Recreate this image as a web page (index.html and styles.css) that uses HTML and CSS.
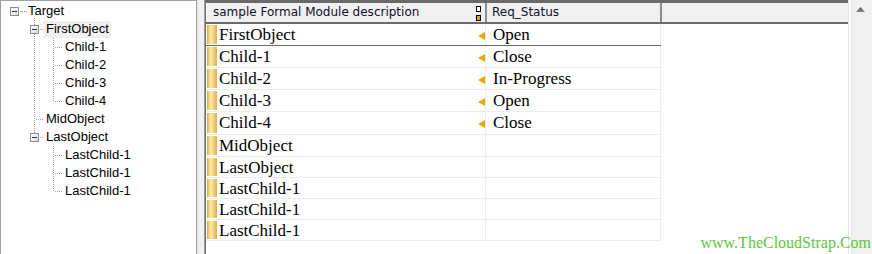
FILE: index.html
```html
<!DOCTYPE html>
<html>
<head>
<meta charset="utf-8">
<title>Formal Module</title>
<link rel="stylesheet" href="styles.css">
</head>
<body>
<div class="app">
  <aside class="tree-pane">
    <ul class="tree">
      <li class="node root">
        <div class="item"><span class="twisty"><span class="box"></span></span><span class="label">Target</span></div>
        <ul class="group g1">
          <li class="node">
            <div class="item"><span class="twisty"><span class="box"></span></span><span class="label selected">FirstObject</span></div>
            <ul class="group">
              <li class="node"><div class="item"><span class="twisty"></span><span class="label">Child-1</span></div></li>
              <li class="node"><div class="item"><span class="twisty"></span><span class="label">Child-2</span></div></li>
              <li class="node"><div class="item"><span class="twisty"></span><span class="label">Child-3</span></div></li>
              <li class="node"><div class="item"><span class="twisty"></span><span class="label">Child-4</span></div></li>
            </ul>
          </li>
          <li class="node"><div class="item"><span class="twisty"></span><span class="label">MidObject</span></div></li>
          <li class="node">
            <div class="item"><span class="twisty"><span class="box"></span></span><span class="label">LastObject</span></div>
            <ul class="group">
              <li class="node"><div class="item"><span class="twisty"></span><span class="label">LastChild-1</span></div></li>
              <li class="node"><div class="item"><span class="twisty"></span><span class="label">LastChild-1</span></div></li>
              <li class="node"><div class="item"><span class="twisty"></span><span class="label">LastChild-1</span></div></li>
            </ul>
          </li>
        </ul>
      </li>
    </ul>
  </aside>
  <div class="splitter"></div>
  <section class="grid-pane">
    <div class="grid">
      <div class="grid-header">
        <div class="hcell c1"><span class="htext">sample Formal Module description</span><span class="col-icon"><i class="slot"></i><i class="slot on"></i></span></div>
        <div class="hcell c2"><span class="htext">Req_Status</span></div>
        <div class="hcell c3"></div>
      </div>
      <div class="grid-body">
        <div class="row current"><div class="cell c1"><span class="marker"></span><span class="text">FirstObject</span><span class="link"></span></div><div class="cell c2">Open</div></div>
        <div class="row"><div class="cell c1"><span class="marker"></span><span class="text">Child-1</span><span class="link"></span></div><div class="cell c2">Close</div></div>
        <div class="row"><div class="cell c1"><span class="marker"></span><span class="text">Child-2</span><span class="link"></span></div><div class="cell c2">In-Progress</div></div>
        <div class="row"><div class="cell c1"><span class="marker"></span><span class="text">Child-3</span><span class="link"></span></div><div class="cell c2">Open</div></div>
        <div class="row tall"><div class="cell c1"><span class="marker"></span><span class="text">Child-4</span><span class="link"></span></div><div class="cell c2">Close</div></div>
        <div class="row"><div class="cell c1"><span class="marker"></span><span class="text">MidObject</span></div><div class="cell c2"></div></div>
        <div class="row compact"><div class="cell c1"><span class="marker"></span><span class="text">LastObject</span></div><div class="cell c2"></div></div>
        <div class="row compact"><div class="cell c1"><span class="marker"></span><span class="text">LastChild-1</span></div><div class="cell c2"></div></div>
        <div class="row compact"><div class="cell c1"><span class="marker"></span><span class="text">LastChild-1</span></div><div class="cell c2"></div></div>
        <div class="row compact"><div class="cell c1"><span class="marker"></span><span class="text">LastChild-1</span></div><div class="cell c2"></div></div>
      </div>
    </div>
    <div class="vscroll"><span class="arrow-up"></span></div>
  </section>
  <div class="watermark">www.TheCloudStrap.Com</div>
</div>
</body>
</html>
```
FILE: styles.css
```css
html, body {
  margin: 0;
  padding: 0;
  background: #ffffff;
}
body {
  width: 872px;
  height: 254px;
  overflow: hidden;
}
.app {
  position: relative;
  display: flex;
  width: 872px;
  height: 254px;
}

/* ---------- tree ---------- */
.tree-pane {
  box-sizing: border-box;
  width: 197px;
  height: 254px;
  border-left: 1px solid #a0a0a0;
  border-top: 1px solid #a0a0a0;
  border-right: 1px solid #a0a0a0;
  background: #fff;
  padding-top: 1px;
  font-family: "Liberation Sans", Arial, sans-serif;
  font-size: 13px;
  color: #000;
}
.tree, .group {
  list-style: none;
  margin: 0;
}
.tree {
  padding: 0 0 0 6px;
}
.group {
  padding: 0 0 0 19px;
}
.g1 {
  padding-left: 20px;
}
.node {
  position: relative;
}
.item {
  position: relative;
  display: flex;
  height: 18px;
}
.twisty {
  flex: none;
  width: 16px;
  height: 18px;
}
.box {
  position: relative;
  display: block;
  box-sizing: border-box;
  width: 9px;
  height: 9px;
  margin: 5px 0 0 3px;
  border: 1px solid #8e8f8f;
  background: linear-gradient(135deg, #ffffff 0%, #f2f2f2 45%, #d6d6d6 100%);
}
.box::after {
  content: "";
  position: absolute;
  left: 1px;
  top: 3px;
  width: 5px;
  height: 1px;
  background: #21336b;
}
.label {
  box-sizing: border-box;
  height: 17px;
  line-height: 15px;
  padding: 0 2px 0 3px;
  margin-top: 1px;
  white-space: nowrap;
}
.root > .item > .label {
  padding-left: 5px;
}
.label.selected {
  background: #f0f0f0;
}
/* dotted connectors */
.group > .node::before {
  content: "";
  position: absolute;
  left: 7px;
  top: 0;
  bottom: 0;
  width: 1px;
  background: repeating-linear-gradient(to bottom, #a0a0a0 0 1px, transparent 1px 2px);
}
.g1 > .node:first-child::before {
  top: -2px;
}
.group > .node:last-child::before {
  bottom: auto;
  height: 9px;
}
.group > .node > .item::before {
  content: "";
  position: absolute;
  left: 8px;
  top: 9px;
  width: 8px;
  height: 1px;
  background: repeating-linear-gradient(to right, transparent 0 1px, #a0a0a0 1px 2px);
}
.root > .item::before {
  content: "";
  position: absolute;
  left: 12px;
  top: 9px;
  width: 8px;
  height: 1px;
  background: repeating-linear-gradient(to right, transparent 0 1px, #a0a0a0 1px 2px);
}

/* ---------- splitter ---------- */
.splitter {
  flex: none;
  width: 7px;
  background: #f0f0f0;
  box-shadow: inset 1px 0 #e3e3e3;
}

/* ---------- grid ---------- */
.grid-pane {
  flex: 1;
  display: flex;
  border-left: 1px solid #a0a0a0;
}
.grid {
  flex: 1;
  border-left: 1px solid #6d6d6d;
  display: flex;
  flex-direction: column;
}
.grid-header {
  display: flex;
  height: 19px;
  border-top: 3px solid #6a6a6a;
  border-bottom: 2px solid #6a6a6a;
  background: #f0f0f0;
  font-family: "DejaVu Sans", Verdana, sans-serif;
  font-size: 12px;
  color: #101028;
}
.hcell {
  box-sizing: border-box;
  display: flex;
  align-items: center;
  height: 19px;
}
.hcell.c1 {
  width: 281px;
  padding-left: 7px;
  border-right: 2px solid #8c8c8c;
  box-shadow: inset 1px 0 #ffffff;
}
.hcell.c2 {
  width: 175px;
  padding-left: 5px;
  border-right: 2px solid #8c8c8c;
}
.hcell.c3 {
  flex: 1;
}
.htext {
  white-space: nowrap;
  line-height: 19px;
}
.col-icon {
  display: flex;
  flex-direction: column;
  gap: 3px;
  margin-left: auto;
  margin-right: 4px;
  margin-top: 1px;
}
.slot {
  display: block;
  box-sizing: border-box;
  width: 5px;
  height: 6px;
  border: 1px solid #000;
  background: #fff;
}
.slot.on {
  background: #f2a100;
}

.grid-body {
  display: flex;
  flex-direction: column;
  font-family: "Liberation Serif", "Times New Roman", serif;
  font-size: 17px;
  color: #000;
}
.row {
  display: flex;
  width: 455px;
  height: 21px;
  border-bottom: 1px solid #ececec;
}
.row.current {
  border-bottom-color: #6a6a6a;
}
.row.tall {
  height: 22px;
}
.row.compact {
  height: 20px;
}
.cell {
  box-sizing: border-box;
  height: 100%;
  border-right: 1px solid #ececec;
  line-height: 21px;
  white-space: nowrap;
}
.cell.c1 {
  display: flex;
  width: 280px;
}
.cell.c2 {
  width: 175px;
  padding-left: 7px;
}
.marker {
  flex: none;
  width: 10px;
  margin: 1px 2px 1px 1px;
  background: linear-gradient(to right, #d9a84a 0%, #f3d27a 20%, #fcebaa 40%, #f2d07c 65%, #dcaf58 100%);
}
.text {
  flex: 1;
}
.link {
  flex: none;
  align-self: flex-start;
  width: 0;
  height: 0;
  margin-top: 8px;
  border-top: 4px solid transparent;
  border-bottom: 4px solid transparent;
  border-right: 7px solid #f5a300;
}

/* ---------- scrollbar ---------- */
.vscroll {
  flex: none;
  width: 24px;
  background: linear-gradient(to right, #e3e3e3 0 1px, #ffffff 1px 3px, #e6e6e6 3px 4px, #f0f0f0 4px);
}
.arrow-up {
  display: block;
  width: 9px;
  height: 5px;
  margin: 7px 0 0 8px;
  background: linear-gradient(to bottom, #505050, #8a8a8a);
  clip-path: polygon(50% 0, 100% 100%, 0 100%);
}

/* ---------- watermark ---------- */
.watermark {
  position: absolute;
  right: 1px;
  bottom: 2px;
  font-family: "Liberation Serif", "Times New Roman", serif;
  font-size: 16px;
  color: #5ec53c;
  white-space: nowrap;
}
```
